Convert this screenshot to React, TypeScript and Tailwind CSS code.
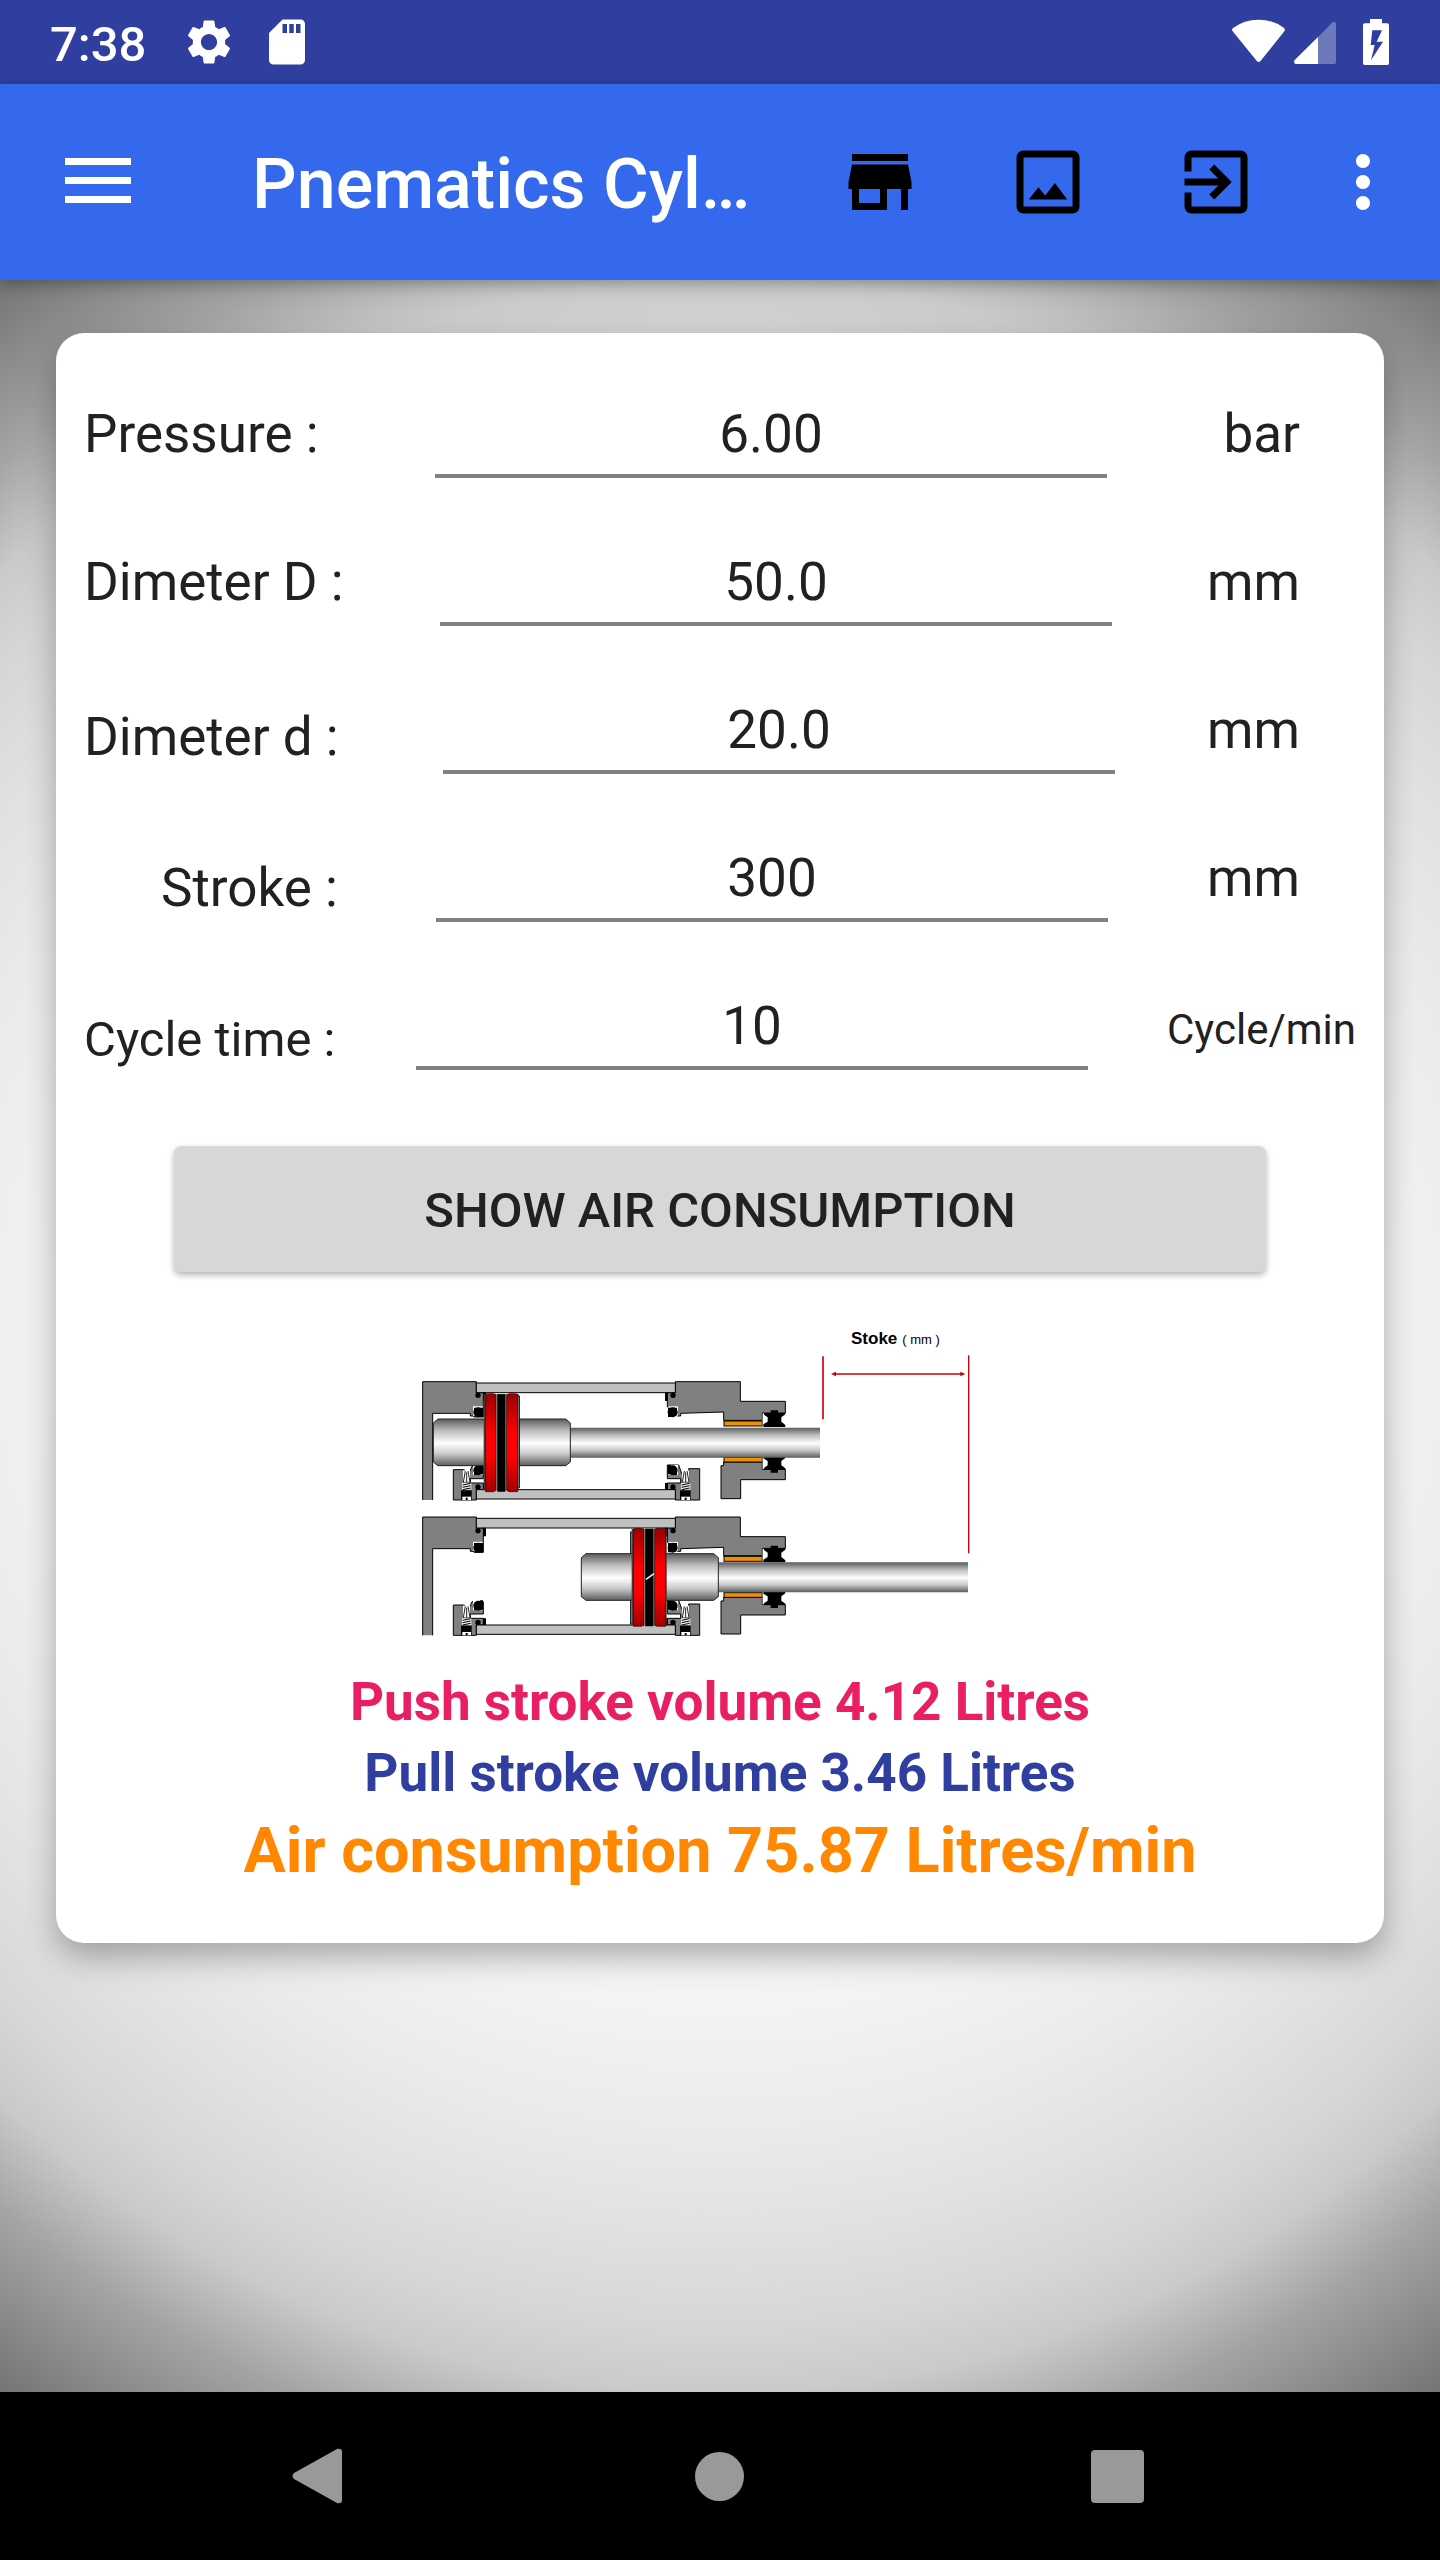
import { useState } from "react";
import { MdCropOriginal, MdExitToApp, MdMoreVert, MdSdCard, MdSettings, MdStore } from "react-icons/md";

type Field = {
  id: string;
  label: string;
  value: string;
  unit: string;
  labelClass: string;
  unitClass: string;
};

const FIELDS: Field[] = [
  {
    id: "pressure",
    label: "Pressure :",
    value: "6.00",
    unit: "bar",
    labelClass: "w-[379px] pl-7 text-[53px]",
    unitClass: "w-[277px] pr-[84px] text-[53px]",
  },
  {
    id: "bore",
    label: "Dimeter D :",
    value: "50.0",
    unit: "mm",
    labelClass: "w-[384px] pl-7 text-[53px]",
    unitClass: "w-[272px] pr-[84px] text-[53px]",
  },
  {
    id: "rod",
    label: "Dimeter d :",
    value: "20.0",
    unit: "mm",
    labelClass: "w-[387px] pl-7 pt-[7px] text-[53px]",
    unitClass: "w-[269px] pr-[84px] text-[53px]",
  },
  {
    id: "stroke",
    label: "Stroke :",
    value: "300",
    unit: "mm",
    labelClass: "w-[380px] pl-[105px] pt-2.5 text-[53px]",
    unitClass: "w-[276px] pr-[84px] text-[53px]",
  },
  {
    id: "cycle",
    label: "Cycle time :",
    value: "10",
    unit: "Cycle/min",
    labelClass: "w-[360px] pl-7 pt-3.5 text-[49px]",
    unitClass: "w-[296px] pr-7 pt-1 text-[42px]",
  },
];

export default function App() {
  return (
    <div className="flex min-h-screen flex-col font-['Roboto','Liberation_Sans',sans-serif]">
      <StatusBar />
      <AppBar />
      <main className="flex-1 bg-[radial-gradient(ellipse_72%_50%_at_50%_50%,#fcfcfc_0%,#f4f4f4_63%,#ebebeb_75%,#e1e1e1_85%,#d6d6d6_94%,#cacaca_100%,#a4a4a4_108%,#737373_122%)] px-14 pt-[53px]">
        <Calculator />
      </main>
      <NavBar />
    </div>
  );
}

function StatusBar() {
  return (
    <div className="flex h-[84px] items-center bg-[#303f9f] pl-[50px] pr-[51px] text-white">
      <span className="pt-1 text-[49px] font-medium leading-none">7:38</span>
      <MdSettings className="ml-9 size-[54px]" />
      <MdSdCard className="ml-6 size-[54px]" />
      <svg className="ml-auto h-[46px] w-[157px]" viewBox="156 57 471 138" fill="currentColor" aria-hidden="true">
        <path d="M158 94Q154 89 159 84Q192 59 236 59T312 84Q317 89 313 94L241 184Q236 188 231 184Z" />
        <path d="M414 111L345 179Q341 183 342 187Q343 192 348 192H414Z" />
        <path d="M414 111L458 67Q468 63 468 71V187Q468 192 463 192H414Z" opacity="0.3" />
        <path
          fillRule="evenodd"
          d="M570 57H606V70H622Q627 70 627 75V190Q627 195 622 195H554Q549 195 549 190V75Q549 70 554 70H570ZM577 91L572 135H584L573 181L609 125H590L606 91Z"
        />
      </svg>
    </div>
  );
}

function AppBar() {
  return (
    <header className="z-10 flex h-[196px] items-center bg-[#3469ee] pr-[35px] text-white shadow-[0_4px_14px_rgba(0,0,0,0.3)]">
      <button type="button" aria-label="Open menu" className="flex h-[196px] w-[196px] flex-col items-center justify-center gap-3 pb-1">
        <span className="h-[7px] w-[66px] bg-white" />
        <span className="h-[7px] w-[66px] bg-white" />
        <span className="h-[7px] w-[66px] bg-white" />
      </button>
      <h1 className="ml-14 flex-1 truncate pt-1 text-[70px] font-medium leading-[84px]">Pnematics Cyl…</h1>
      <button type="button" aria-label="Store" className="flex w-[168px] justify-center text-black">
        <MdStore className="size-[84px]" />
      </button>
      <button type="button" aria-label="Gallery" className="flex w-[168px] justify-center text-black">
        <MdCropOriginal className="size-[84px]" />
      </button>
      <button type="button" aria-label="Exit" className="flex w-[168px] justify-center text-black">
        <MdExitToApp className="size-[84px]" />
      </button>
      <button type="button" aria-label="More options" className="ml-[21px] flex justify-center">
        <MdMoreVert className="size-[84px]" />
      </button>
    </header>
  );
}

function Calculator() {
  const [values, setValues] = useState(() => FIELDS.map((field) => field.value));

  return (
    <form
      className="flex flex-col items-center rounded-[28px] bg-white pb-[50px] pt-[45px] text-[#212121] shadow-[0_14px_32px_rgba(0,0,0,0.3)]"
      onSubmit={(event) => event.preventDefault()}
    >
      <div className="flex w-full flex-col">
        {FIELDS.map((field, index) => (
          <div key={field.id} className="flex h-[148px] items-start pt-5 leading-[72px]">
            <label htmlFor={field.id} className={`shrink-0 whitespace-nowrap ${field.labelClass}`}>
              {field.label}
            </label>
            <input
              id={field.id}
              className="h-20 min-w-0 flex-1 border-b-4 border-[#808080] pb-1 text-center text-[53px] leading-[72px] outline-none"
              inputMode="decimal"
              value={values[index]}
              onChange={(event) =>
                setValues(values.map((value, i) => (i === index ? event.target.value : value)))
              }
            />
            <span className={`shrink-0 text-right ${field.unitClass}`}>{field.unit}</span>
          </div>
        ))}
      </div>

      <div className="mt-7 w-full px-[118px]">
        <button
          type="submit"
          className="h-[126px] w-full rounded-[7px] bg-[#d6d7d7] pt-1 text-[49px] font-medium uppercase shadow-[0_3px_6px_rgba(0,0,0,0.3)]"
        >
          Show air consumption
        </button>
      </div>

      <CylinderDiagram />

      <div className="mt-[30px] text-center font-bold">
        <p className="text-[53px] leading-[71px] text-[#e91e63]">Push stroke volume 4.12 Litres</p>
        <p className="text-[53px] leading-[71px] text-[#303f9f]">Pull stroke volume 3.46 Litres</p>
        <p className="text-[63px] leading-[84px] text-[#ff8800]">Air consumption 75.87 Litres/min</p>
      </div>
    </form>
  );
}

function CylinderDiagram() {
  return (
    <svg className="mt-[55px] h-[310px] w-[600px]" viewBox="60 20 1800 930" role="img" aria-label="Cylinder stroke">
      <defs>
        <linearGradient id="steel" x1="0" y1="0" x2="0" y2="1">
          <stop offset="0" stopColor="#5c5c5c" />
          <stop offset="0.25" stopColor="#bdbdbd" />
          <stop offset="0.52" stopColor="#ffffff" />
          <stop offset="0.75" stopColor="#c8c8c8" />
          <stop offset="1" stopColor="#5c5c5c" />
        </linearGradient>
        <linearGradient id="ring" x1="0" y1="0" x2="0" y2="1">
          <stop offset="0" stopColor="#990000" />
          <stop offset="0.4" stopColor="#ff0000" />
          <stop offset="0.65" stopColor="#ff0000" />
          <stop offset="1" stopColor="#a00000" />
        </linearGradient>
      </defs>

      <Housing />
      <Piston />
      <path d="M354 227H358V502H354" fill="#808080" stroke="#000" strokeWidth="3" />
      <g transform="translate(0 406)">
        <Housing />
      </g>
      <g transform="translate(444 404)">
        <rect x="248" y="231" width="8" height="276" fill="#a0a0a0" stroke="#000" strokeWidth="3" />
        <Piston />
        <path d="M294 373L318 356" stroke="#fff" strokeWidth="4" />
      </g>

      <g stroke="#cc0000" fill="#cc0000">
        <path d="M1269 108V297" strokeWidth="5" />
        <path d="M1706 105V699" strokeWidth="4" />
        <path d="M1300 161H1690" strokeWidth="5" />
        <path d="M1293 161L1308 154V168ZM1696 161L1681 154V168Z" stroke="none" />
      </g>
      <text x="1353" y="72" fontFamily="Liberation Sans, sans-serif" fontSize="51" fontWeight="700">
        Stoke
      </text>
      <text x="1507" y="72" fontFamily="Liberation Sans, sans-serif" fontSize="39">
        ( mm )
      </text>
    </svg>
  );
}

function Housing() {
  return (
    <g>
      <g fill="#808080" stroke="#000" strokeWidth="3">
        <path d="M68 539V184H229V217H250V290H222V287H211V279H98V539" />
        <path d="M826 184H1021V243H1156V278H1087V300H971V275L842 279V287H832V260H802V217H826Z" />
        <path d="M963 535V436H971V425H1087V447H1156V478H1022V535Z" />
        <path d="M160 539V448H193V462H206L216 438H250V475H211V488H250V508H229V539Z" />
        <path d="M899 539V445H866V462H846L836 434H802V475H842V488H802V508H826V539Z" />
      </g>
      <g fill="#c0c0c0" stroke="#000" strokeWidth="3">
        <rect x="229" y="188" width="597" height="29" />
        <rect x="229" y="508" width="597" height="28" />
      </g>
      <g fill="#f09000" stroke="#000" strokeWidth="3">
        <rect x="972" y="302" width="115" height="15" />
        <rect x="972" y="411" width="115" height="14" />
      </g>
      <path d="M1088 280H1156V318H1088ZM1088 408H1156V446H1088Z" fill="#fff" />
      <path d="M1092 278H1112V270H1134V278H1156V282L1144 291V304L1156 314V320H1090V312L1103 304V291L1092 283Z" />
      <path d="M1090 407H1156V413L1144 422V435L1156 444V448H1134V457H1112V448H1092V443L1103 435V422L1090 414Z" />
      <EndSeals />
      <g transform="matrix(-1 0 0 1 1053 0)">
        <EndSeals />
      </g>
      <Screw />
      <g transform="translate(657 0)">
        <Screw />
      </g>
    </g>
  );
}

function EndSeals() {
  return (
    <g>
      <path d="M219 258H248V286H219ZM219 434H248V464H219Z" fill="#fff" />
      <circle cx="235" cy="276" r="15" />
      <circle cx="235" cy="450" r="15" />
      <path d="M222 262H232V270H222ZM240 262H249V290H240ZM222 454H232V464H222ZM240 434H249V462H240Z" />
      <circle cx="234" cy="225" r="8" />
      <circle cx="234" cy="500" r="8" />
      <path d="M249 216H258V242H249ZM249 488H258V508H249Z" />
    </g>
  );
}

function Screw() {
  return (
    <g>
      <path d="M189 450H210V484H189Z" fill="#fff" />
      <path d="M196 452L190 486M200 456V486M204 452L210 486" stroke="#222" strokeWidth="3" />
      <path d="M186 488H214V508H186Z" fill="#eee" />
      <path d="M188 494L212 489M188 501L212 496M188 508L212 503" stroke="#000" strokeWidth="3" />
      <path d="M183 510H215V539H183Z" />
      <path d="M187 529H213V539H187Z" fill="#fff" />
      <path d="M197 532H203V539H197Z" />
    </g>
  );
}

function Piston() {
  return (
    <g>
      <g fill="url(#steel)" stroke="#222" strokeWidth="3">
        <path d="M511 322H1260V412H511Z" strokeWidth="0" />
        <path d="M100 308L114 296H497L511 308V425L497 436H114L100 425Z" />
      </g>
      <path d="M251 222H356V510H251Z" fill="#444" />
      <path d="M288 222H292V512H288ZM316 222H320V512H316Z" fill="#aaa" />
      <path d="M292 222H316V514H292Z" />
      <g fill="url(#ring)" stroke="#300" strokeWidth="2">
        <path d="M256 222L262 220H281L288 224V510L281 514H256Z" />
        <path d="M320 224L327 220H347L353 222V514H327L320 510Z" />
      </g>
    </g>
  );
}

function NavBar() {
  return (
    <nav className="flex h-[168px] items-center justify-between bg-black pl-[292px] pr-[296px] text-[#999999]">
      <button type="button" aria-label="Back">
        <svg className="size-14" viewBox="0 0 56 56" fill="currentColor">
          <path d="M2 25L45 1Q50 0 50 4V52Q50 56 45 55L2 31Q-1 28 2 25Z" />
        </svg>
      </button>
      <button type="button" aria-label="Home" className="size-[49px] rounded-full bg-[#999999]" />
      <button type="button" aria-label="Recent apps" className="size-[53px] rounded-[4px] bg-[#999999]" />
    </nav>
  );
}
